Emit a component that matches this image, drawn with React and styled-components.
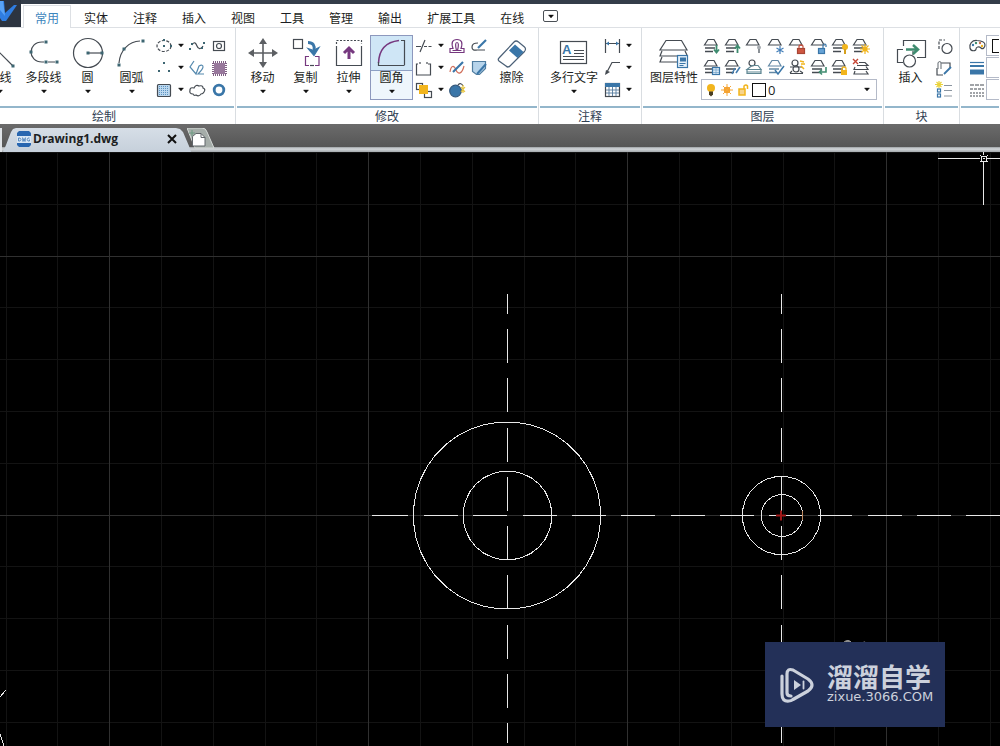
import React from 'react';
import styled, { createGlobalStyle, css } from 'styled-components';

const GlobalStyle = createGlobalStyle`
  * { box-sizing: border-box; }
  body {
    margin: 0;
    background: #000;
    font-family: "Noto Sans CJK SC", sans-serif;
    font-size: 12px;
    color: #1c1e22;
  }
  button, select {
    font: inherit;
    color: inherit;
    margin: 0;
    padding: 0;
    border: 0;
    background: none;
  }
`;

const Page = styled.div`
  display: flex;
  flex-direction: column;
  min-height: 100vh;
  overflow: hidden;
`;

const Header = styled.header`
  display: flex;
  height: 28px;
  background: #fff;
  border-top: 4px solid #343d49;
  border-bottom: 1px solid #dde0e4;
`;

const AppButton = styled.button`
  width: 21px;
  height: 27px;
  margin-top: -4px;
  background: #2c3440;
  line-height: 0;
  flex: none;
`;

const Tabs = styled.nav`
  display: flex;
  gap: 1px;
  padding: 1px 0 0 2px;
`;

const Tab = styled.a`
  height: 23px;
  padding: 0 12px;
  line-height: 25px;
  white-space: nowrap;
  text-decoration: none;
  color: ${(p) => (p.$active ? '#3d86bd' : '#1c1e22')};
  ${(p) => p.$active && css`
    background: #fff;
    box-shadow: inset 1px 0 #dde0e4, inset -1px 0 #dde0e4, inset 0 1px #dde0e4;
  `}
`;

const TabMenu = styled.button`
  display: flex;
  align-items: center;
  justify-content: center;
  width: 15px;
  height: 12px;
  margin: 5px 0 0 6px;
  border: 1px solid #4a4f55;
  border-radius: 2px;
`;

const Ribbon = styled.div`
  display: flex;
  height: 96px;
  margin-left: -27px;
  background: #fff;
`;

const Panel = styled.section`
  display: flex;
  flex-direction: column;
  flex: ${(p) => (p.$fill ? '1 1 0' : 'none')};
  min-width: 0;
  border-right: ${(p) => (p.$fill ? '0' : '1px solid #d9dde1')};
`;

const PanelBody = styled.div`
  display: flex;
  gap: ${(p) => p.$gap || 0}px;
  height: 80px;
  padding: 7px ${(p) => p.$right}px 0 ${(p) => p.$left}px;
  border-bottom: 2px solid #93b6cb;
  margin: 0 1px;
`;

const PanelTitle = styled.h2`
  margin: 0;
  font-size: 12px;
  font-weight: 400;
  line-height: 15px;
  text-align: center;
  color: #2f4052;
`;

const Buttons = styled.div`
  display: flex;
  gap: ${(p) => p.$gap || 0}px;
`;

const ToolButton = styled.button`
  display: flex;
  flex-direction: column;
  align-items: center;
  width: ${(p) => (p.$wide ? 52 : 43)}px;
  height: 65px;
  padding-top: 2px;
  white-space: nowrap;
  ${(p) => p.$active && css`
    background: linear-gradient(#cfe6f6 0 35px, #8da0c4 35px 36px, #eef6fc 36px);
    box-shadow: inset 0 0 0 1px #8d98bd;
  `}
`;

const ToolLabel = styled.span`
  height: 20px;
  line-height: 15px;
`;

const SmallGrid = styled.div`
  display: grid;
  grid-template-columns: ${(p) => p.$columns};
  grid-auto-rows: 21px;
  row-gap: 1px;
  align-items: center;
`;

const IconButton = styled.button`
  width: ${(p) => (p.$caret ? 15 : 18)}px;
  height: 20px;
  display: flex;
  align-items: center;
  justify-content: center;
`;

const LayerTools = styled.div`
  display: flex;
  flex-direction: column;
  gap: 2px;
  width: 176px;
`;

const LayerIcons = styled.div`
  display: grid;
  grid-template-columns: repeat(8, 1fr);
  grid-auto-rows: 21px;
  align-items: center;
  justify-items: center;
  padding-right: 5px;
`;

const LayerField = styled.label`
  display: flex;
  align-items: center;
  height: 21px;
  padding: 0 5px 0 1px;
  border: 1px solid #b4bac8;
  background: #fff;
`;

const LayerSelect = styled.select`
  appearance: none;
  flex: 1;
  height: 19px;
  outline: 0;
  font-family: "Open Sans", "Noto Sans CJK SC", sans-serif;
  font-size: 13px;
  line-height: 18px;
`;

const Swatch = styled.span`
  flex: none;
  width: 14px;
  height: 14px;
  margin: 0 2px;
  border: 1px solid #111;
  background: #fff;
`;

const PropertyRows = styled.div`
  display: grid;
  grid-template-columns: 18px 1fr;
  grid-auto-rows: 21px;
  row-gap: 1px;
  align-items: center;
  flex: 1;
`;

const PropertyField = styled.label`
  display: flex;
  align-items: center;
  height: 21px;
  overflow: hidden;
  border: 1px solid #b4bac8;
  border-right: 0;
  padding-left: 3px;
`;

const PropertySelect = styled.select`
  appearance: none;
  width: 100%;
  height: 19px;
`;

const DocBar = styled.div`
  display: flex;
  align-items: flex-end;
  height: 28px;
  background: linear-gradient(#6b6b6b, #565656 23px, #9da1a4 23px, #d3d7da 25px, #a3a8ac 28px);
`;

const DocEdge = styled.span`
  width: 2px;
  height: 24px;
  background: #dfe3e7;
  margin-right: 1px;
`;

const DocTab = styled.div`
  display: flex;
  align-items: center;
  width: 188px;
  height: 24px;
  padding: 0 14px 3px 14px;
  background: linear-gradient(#d6dee7, #c6d0db);
  clip-path: polygon(0 100%, 3px 17px, 8px 4px, 10px 1px, 13px 0, calc(100% - 15px) 0, calc(100% - 11px) 1px, calc(100% - 8px) 4px, calc(100% - 2px) 18px, 100% 100%);
`;

const DocName = styled.button`
  flex: 1;
  margin-left: 2px;
  text-align: left;
  font-family: "Open Sans", "Noto Sans CJK SC", sans-serif;
  font-size: 12px;
  font-weight: 700;
  line-height: 20px;
`;

const CloseButton = styled.button`
  width: 12px;
  height: 20px;
  display: flex;
  align-items: center;
  justify-content: flex-end;
`;

const NewTab = styled.button`
  width: 28px;
  height: 24px;
  margin-left: -4px;
  line-height: 0;
`;

const Canvas = styled.main`
  position: relative;
  flex: 1;
  display: flex;
  min-height: 400px;
  background: #000;
`;

const Drawing = styled.svg`
  display: block;
  flex: 1;
  min-width: 0;
  height: auto;
`;

const Watermark = styled.div`
  position: absolute;
  right: 55px;
  bottom: 19px;
  display: flex;
  align-items: center;
  gap: 11px;
  width: 180px;
  height: 85px;
  padding-left: 14px;
  background: #233058;
  color: #ccd1dc;
`;

const WatermarkText = styled.div`
  display: flex;
  flex-direction: column;
  padding-bottom: 4px;
`;

const WatermarkName = styled.strong`
  font-size: 26px;
  font-weight: 700;
  line-height: 28px;
  white-space: nowrap;
`;

const WatermarkUrl = styled.span`
  font-family: "DejaVu Sans", sans-serif;
  font-size: 13px;
  line-height: 14px;
`;

const DARK = '#454b52';
const BLUE = '#3a76a8';
const PURPLE = '#76387f';
const GREEN = '#3f8c70';
const YELLOW = '#f2b51d';

const Caret = () => (
  <svg width="8" height="5" viewBox="0 0 8 5" aria-hidden="true">
    <path d="M1.500 1h5L4 4z" fill="#111" stroke="#111" strokeWidth=".4" />
  </svg>
);

const Big = ({ children }) => (
  <svg width="32" height="32" viewBox="0 0 32 32" fill="none" stroke={DARK} strokeWidth="1.2" aria-hidden="true" style={{ flex: 'none' }}>
    {children}
  </svg>
);

const Small = ({ children }) => (
  <svg width="18" height="18" viewBox="0 0 18 18" fill="none" stroke={DARK} strokeWidth="1.2" aria-hidden="true" style={{ flex: 'none' }}>
    {children}
  </svg>
);

const Node = ({ x, y, s = 3 }) => (
  <rect x={x - s / 2} y={y - s / 2} width={s} height={s} fill="#3d6672" stroke="none" />
);

const bigIcons = {
  line: <><path d="M3 3l26 26" /><Node x={3} y={3} /><Node x={29} y={29} /></>,
  polyline: <><path d="M16 5h-2C7 5 3 10 3 15s4 10 11 10h2M20 25h7" /><Node x={18} y={5} /><Node x={3} y={15} /><Node x={18} y={25} /><Node x={29} y={25} /></>,
  circle: <><circle cx="16" cy="16" r="14.500" /><path d="M16 16h14" /><Node x={16} y={16} /><Node x={30} y={16} /></>,
  arc: <><path d="M24 4C13 4.500 4 13 3 26" /><Node x={27} y={4} /><Node x={8} y={12} /><Node x={3} y={28} /></>,
  move: <><path d="M16 5v22M5 16h22" strokeWidth="1.6" stroke="#5c5f63" /><path d="M16 1l4 6h-8zM16 31l4-6h-8zM1 16l6-4v8zM31 16l-6-4v8z" fill="#5c5f63" stroke="none" /></>,
  copy: <><rect x="3.500" y="2.500" width="9" height="9" /><path d="M18 5.500c5 0 7 3 6 8" stroke={BLUE} strokeWidth="3" /><path d="M18 11.500l3 1 2 1 6-3-5 8z" fill={BLUE} stroke={BLUE} /><path d="M19 19.500h-3.500v9h3.500M25 19.500h4v9h-4" stroke={PURPLE} /><path d="M20 28.500h4" stroke={DARK} /></>,
  stretch: <><path d="M3.500 9v19.500h25V9" /><path d="M3.500 7V3.500h25V7" strokeDasharray="2 1.500" /><path d="M16 22V11M11 16l5-5 5 5" stroke={PURPLE} strokeWidth="3" /></>,
  fillet: <><path d="M2.500 26C3 13 10 5 23 3.500" stroke={PURPLE} strokeWidth="1.500" /><path d="M25 3.500h3.500V28" /><path d="M2.500 25v3.500h26" /></>,
  eraser: <><path d="M3 21L18 5q2-2 4.500 0l6 5q2 2 0 4.500L14 29q-2 2-4 0l-7-5q-1.500-1.500 0-3z" fill="#fff" stroke="#4b6077" /><path d="M18 6.500l8.500 7.500-6 6L12 12.500z" fill={BLUE} stroke="none" transform="translate(1 1)" /></>,
  mtext: <><rect x="2.500" y="4.500" width="26" height="22" /><path d="M16 13.500h10M16 16.500h10M5 19.500h21M5 22.500h21" /><text x="4" y="17" fontFamily="Liberation Sans" fontWeight="700" fontSize="13" fill={BLUE} stroke="none">A</text></>,
  layerProps: <><path d="M8 3.500h15.500L29 13H2zM4 14l-2 5h18M4 20l-2 5h17M27 14l2 4" /><rect x="19.500" y="18.500" width="10" height="12" fill="#e6f1fa" stroke={BLUE} /><path d="M21.500 26.500h6M21.500 28.500h4" stroke={BLUE} /><rect x="22" y="20.500" width="6" height="4" fill={BLUE} stroke="none" /></>,
  insert: <><path d="M8.500 9V3.500h22v17H22M8 12.500H2.500v13H8M18 14v4" /><circle cx="14.500" cy="24" r="6" /><path d="M11 12.500h12M18 8l5 4.500-5 4.500" stroke={GREEN} strokeWidth="2.500" /></>,
};

const smallIcons = {
  ellipse: <><ellipse cx="9" cy="9" rx="7" ry="5.500" strokeDasharray="3 1.500" /><Node x={9} y={9} s={2} /><Node x={9} y={3} s={2} /><Node x={16} y={9} s={2} /></>,
  spline: <><path d="M4 8c2-4 4-2 5 1s4 4 6 0" /><Node x={2} y={12} s={2} /><Node x={4} y={7} s={2} /><Node x={16} y={6} s={2} /><Node x={14} y={11} s={2} /></>,
  region: <><rect x="3.500" y="4.500" width="11" height="9" /><circle cx="9" cy="9" r="2.500" /></>,
  points: <><Node x={9} y={4} s={2} /><Node x={4} y={12} s={2} /><Node x={14} y={12} s={2} /></>,
  wave: <path d="M6 2L2 8l6 7 3-8q4-2 4 1 0 2-5 7h6" stroke="#5589ae" />,
  gradient: <><rect x="4" y="4" width="11" height="11" fill="#98789c" stroke="none" /><rect x="3" y="3" width="13" height="13" stroke="#806084" strokeDasharray="1 1" strokeWidth="2" /></>,
  hatch: <><rect x="2.500" y="3.500" width="13" height="12" rx="1" fill="#bcd8ef" /><path d="M4 5.500h10M4 7.500h10M4 9.500h10M4 11.500h10M4 13.500h10" stroke="#5e94c1" strokeDasharray="1 1" /></>,
  cloud: <path d="M5 13q-4 0-3-4 0-3 4-2 2-4 5-2 4-1 4 2 3 1 1 4-1 2-3 2-2 3-5 1-2 1-3-1z" />,
  donut: <circle cx="9" cy="9" r="4.800" stroke={BLUE} strokeWidth="2.800" />,
  trim: <><path d="M5 15l5-12M1 9.500h5" /><path d="M9 9.500h8" strokeDasharray="3 1.500" /></>,
  offset: <><path d="M2 15.500h14v-4h-3q3-9-4-9t-4 9H2z" stroke={PURPLE} /><path d="M4.500 13.500h4q-2-8 .5-8t.5 8h4" stroke={PURPLE} /></>,
  editLine: <><path d="M8 6Q2 6 2 10t5 3h8" /><path d="M8 11l8-8" stroke={BLUE} strokeWidth="2.200" /></>,
  breakLine: <><path d="M3 5H1.500v11h14V5H13" /><path d="M5 3v2M12 3v2" /></>,
  editSpline: <><path d="M2 13c1-7 4-7 6-2s6 4 8-4" stroke="#d1705c" /><path d="M5 13l10-10" stroke={BLUE} strokeWidth="2.200" /></>,
  editHatch: <><path d="M2.500 2.500h13v7l-6 6h-3l-4-3z" fill="#b7d4eb" stroke="#507da0" /><path d="M7 15l9-10" stroke={BLUE} strokeWidth="2" /></>,
  order: <><rect x="1.500" y="2.500" width="6" height="6" /><rect x="9.500" y="10.500" width="7" height="6" /><rect x="4" y="4" width="9" height="9" fill={YELLOW} stroke="none" /></>,
  explode: <><circle cx="7.500" cy="10" r="5.800" fill={BLUE} stroke="#365a7d" /><path d="M10 4q3-3 5 1" /><path d="M13 6l4 5M17 6l-4 5M15 4v8" stroke="#e6c33c" /></>,
  dimension: <><path d="M2.500 2v14M16.500 2v14M3 6.500h13" /><path d="M3 6.500l3-2v4zM16 6.500l-3-2v4z" fill={BLUE} stroke="none" /></>,
  leader: <><path d="M17 3.500H9L4 13" /><path d="M2 16l1-5 4 2z" fill={DARK} stroke="none" /></>,
  table: <><rect x="2.500" y="2.500" width="14" height="13" /><path d="M2 4h15" stroke={BLUE} strokeWidth="4" /><path d="M3 9h13M3 12h13M6 6v9M9.500 6v9M13 6v9" strokeWidth=".9" stroke="#557b9d" /></>,
  blockEdit: <><path d="M4 12V3h6" strokeDasharray="3 1.500" /><circle cx="12" cy="11.500" r="5" /></>,
  blockAttr: <><path d="M6 4h9v5M2 9v7h6" /><path d="M3 10V4q2-3 3 0v6" stroke="#7a8086" /><path d="M9 15l7-7" stroke={BLUE} strokeWidth="1.800" /></>,
  blockList: <><path d="M9 4.500h8M9 9.500h8M9 15h8" stroke="#8b95a0" /><rect x="2.500" y="8" width="3" height="3" stroke={BLUE} /><rect x="2.500" y="13" width="3" height="3" stroke={BLUE} /><path d="M4 0v7M0 3.500h8M1.500 1l5 5M6.500 1l-5 5" stroke="#ead33b" /></>,
  palette: <><path d="M9 3.500C4 3 1 7 2 11s6 3 6 1 3-3 5-1 4-1 4-3q0-4-8-4.500z" /><circle cx="5" cy="8" r="1.200" fill={BLUE} stroke="none" /><circle cx="8" cy="6" r="1.200" fill={GREEN} stroke="none" /><circle cx="12" cy="6" r="1.200" fill="#cc7350" stroke="none" /><circle cx="14" cy="9" r="1.200" fill={YELLOW} stroke="none" /></>,
  lineWeight: <><path d="M2 3.500h14" stroke={BLUE} /><path d="M2 7h14" stroke={BLUE} strokeWidth="2" /><path d="M2 13h14" stroke={BLUE} strokeWidth="5" /></>,
  lineType: <><path d="M2 4h14" strokeDasharray="4 1" /><path d="M2 8h14" strokeDasharray="3 1" /><path d="M2 12h14M2 15h14" strokeDasharray="2 1" /></>,
};

const Sheets = ({ lines = 2, color = DARK }) => (
  <g stroke={color}>
    <path d="M5 2.500h6l3 5.500H1.500z" />
    {lines > 0 && <path d="M2 11h10" strokeWidth="1.500" />}
    {lines > 1 && <path d="M2 14.500h8" strokeWidth="1.500" />}
  </g>
);

const layerIcons = [
  ['图层下移', <><Sheets /><path d="M13.500 8v7M11 12.500l2.500 3 2.500-3" stroke={GREEN} strokeWidth="1.800" /></>],
  ['图层上移', <><Sheets /><path d="M13.500 16V9M11 11.500l2.500-3 2.500 3" stroke={GREEN} strokeWidth="1.800" /></>],
  ['关闭图层', <><Sheets lines={0} /><circle cx="14" cy="10.500" r="2" fill="#a6abb0" stroke="none" /><path d="M14 12v4" stroke="#8a9096" strokeWidth="2" /></>],
  ['冻结图层', <><Sheets lines={0} /><path d="M13 9v8M9.500 11l7 4M16.500 11l-7 4" stroke="#437eb8" /></>],
  ['锁定图层', <><Sheets lines={0} /><rect x="9.500" y="11.500" width="7" height="5" fill="#cf5742" stroke="#a84535" /><path d="M11 11V9q2-2 4 0v2" stroke="#c4503d" /></>],
  ['解锁图层', <><Sheets lines={0} /><rect x="8.500" y="11.500" width="6" height="5" fill="#66a3d6" stroke={BLUE} /><path d="M13 11V8q2-2 3 0v2" stroke={BLUE} /></>],
  ['打开所有图层', <><Sheets /><circle cx="14" cy="10" r="3" fill={YELLOW} stroke="none" /><path d="M14 12v5" stroke="#d5a01e" strokeWidth="2" /></>],
  ['解冻所有图层', <><Sheets /><circle cx="13" cy="12" r="2.500" fill={YELLOW} stroke="none" /><path d="M13 7v10M8 12h10M9.500 8.500l7 7M16.500 8.500l-7 7" stroke={YELLOW} /></>],
  ['图层状态', <><Sheets /><rect x="9.500" y="9.500" width="7" height="7" fill="#dcecf7" stroke={BLUE} /><path d="M10 12h6M10 14.500h6M13 10v6" stroke="#70a2c8" strokeWidth=".7" /></>],
  ['匹配图层', <><Sheets /><path d="M8 16l3-6M12 15l4-6" stroke="#477eb0" strokeWidth="1.600" /></>],
  ['隔离图层', <><circle cx="7" cy="5" r="3" /><path d="M7 7.500h6l3 4H2z" stroke="#5f8793" /><path d="M2 11.500v4h14v-4M2 14h14" stroke="#5f8793" /></>],
  ['当前图层', <><Sheets color="#6288a5" /><path d="M8 12l3 4 6-8" stroke={BLUE} strokeWidth="1.500" /></>],
  ['图层漫游', <><circle cx="7" cy="5" r="3" /><circle cx="8" cy="11" r="3" /><path d="M2 9h12M2 15.500h13M4 13l-2 2M12 13l3 2" /><path d="M12 3l4 1M13 6h4M13 8l3 3" stroke={YELLOW} strokeWidth="1.500" /></>],
  ['上一图层', <><Sheets /><path d="M16 9v5h-6M12 11.500L9.500 14l2.500 2.500" stroke={GREEN} strokeWidth="1.600" /></>],
  ['锁定其他图层', <><Sheets /><rect x="10" y="12" width="6" height="5" fill={YELLOW} stroke="none" /><path d="M11 12v-2q2-2 4 0v2" stroke={YELLOW} /></>],
  ['删除图层', <><path d="M7 4.500h6l3 3H5M3 9l-1 2.500h14l-2-3M3 13l-1 3h14l-2-3" /><path d="M1 1l5 5M6 1L1 6" stroke="#c54635" strokeWidth="1.400" /></>],
];

const Tool = ({ icon, label, caret = true, wide, active }) => (
  <ToolButton $wide={wide} $active={active} aria-pressed={active}>
    <Big>{bigIcons[icon]}</Big>
    <ToolLabel>{label}</ToolLabel>
    {caret && <Caret />}
  </ToolButton>
);

const Mini = ({ icon, label }) => (
  <IconButton aria-label={label}><Small>{smallIcons[icon]}</Small></IconButton>
);

const More = ({ label }) => (
  <IconButton $caret aria-label={label}><Caret /></IconButton>
);

const tabs = ['常用', '实体', '注释', '插入', '视图', '工具', '管理', '输出', '扩展工具', '在线'];

const ring = (cx, cy, r, sides) =>
  Array.from({ length: sides }, (_, i) => {
    const a = (Math.PI * 2 * (i + 0.5)) / sides;
    return `${(cx + r * Math.cos(a)).toFixed(1)},${(cy + r * Math.sin(a)).toFixed(1)}`;
  }).join(' ');

const GRID = 51.8;
const gridLines = Array.from({ length: 60 }, (_, i) => i);

const GridLines = () => (
  <g shapeRendering="crispEdges">
    {[false, true].map((major) => (
      <g key={String(major)} stroke={major ? '#303030' : '#131313'}>
        {gridLines.filter((i) => ((i + 3) % 5 === 0) === major).map((i) => (
          <path key={i} d={`M${Math.floor(6 + i * GRID) + 0.5} 0V3000`} />
        ))}
        {gridLines.filter((i) => ((i + 3) % 5 === 0) === major).map((i) => (
          <path key={i} d={`M0 ${Math.round(i * GRID) + 0.5}H4000`} />
        ))}
      </g>
    ))}
  </g>
);

const CenterLine = ({ x }) => (
  <>
    <path d={`M${x} 142v20`} />
    <path d={`M${x} 177V591`} strokeDasharray="34 15.250" />
  </>
);

function Sketch() {
  return (
    <Drawing role="img" aria-label="Drawing1.dwg">
      <GridLines />
      <g fill="none" stroke="#e8e8e8" shapeRendering="crispEdges">
        <CenterLine x={507.5} />
        <CenterLine x={781.5} />
        <path d="M372 363.500h36" />
        <path d="M424 363.500H4000" strokeDasharray="34 15.300" />
        <polygon points={ring(507, 363.5, 93.7, 40)} />
        <polygon points={ring(507.5, 363.5, 44.5, 28)} />
        <polygon points={ring(781.5, 363.5, 39.3, 24)} />
        <polygon points={ring(782, 363.5, 21, 20)} />
        <path d="M0 545l6-7M0 582l4 12" />
        <path d="M938 6.500h42M987 6.500h60M983.500 0v3M983.500 10v43" />
        <rect x="981.500" y="4.500" width="5" height="5" />
        <path d="M980 3l2 2M988 3l-2 2M980 10l2-2M988 10l-2-2M983 6.500h2" />
      </g>
      <path d="M776 363.500h10M781 358.500v10" stroke="#a01818" strokeWidth="2" />
      <path d="M802.500 359v9" stroke="#c08a60" />
      <path d="M843 491q5-5 9 0M862 491q2-2 5 0" stroke="#aaa" fill="#888" />
    </Drawing>
  );
}

export default function App() {
  return (
    <Page>
      <GlobalStyle />
      <Header>
        <AppButton aria-label="应用程序菜单">
          <svg width="21" height="27" viewBox="0 0 21 27">
            <path d="M0 1h4l1 12L14 5h3L6 21H2L0 18z" fill="#2f7de0" />
            <path d="M0 1h3l2 15-5-6z" fill="#58a3f5" />
          </svg>
        </AppButton>
        <Tabs>
          {tabs.map((t, i) => (
            <Tab key={t} href="#" $active={i === 0}>{t}</Tab>
          ))}
          <TabMenu aria-label="更多选项卡"><Caret /></TabMenu>
        </Tabs>
      </Header>

      <Ribbon>
        <Panel>
          <PanelBody $left={4} $right={6} $gap={2}>
            <Buttons $gap={1}>
              <Tool icon="line" label="直线" />
              <Tool icon="polyline" label="多段线" />
              <Tool icon="circle" label="圆" />
              <Tool icon="arc" label="圆弧" />
            </Buttons>
            <SmallGrid $columns="18px 15px 22px 18px">
              <Mini icon="ellipse" label="椭圆" /><More label="椭圆选项" /><Mini icon="spline" label="样条曲线" /><Mini icon="region" label="面域" />
              <Mini icon="points" label="点" /><More label="点选项" /><Mini icon="wave" label="徒手画" /><Mini icon="gradient" label="渐变色" />
              <Mini icon="hatch" label="图案填充" /><More label="填充选项" /><Mini icon="cloud" label="修订云线" /><Mini icon="donut" label="圆环" />
            </SmallGrid>
          </PanelBody>
          <PanelTitle>绘制</PanelTitle>
        </Panel>

        <Panel>
          <PanelBody $left={4} $right={4} $gap={2}>
            <Buttons>
              <Tool icon="move" label="移动" />
              <Tool icon="copy" label="复制" />
              <Tool icon="stretch" label="拉伸" />
              <Tool icon="fillet" label="圆角" active />
            </Buttons>
            <SmallGrid $columns="18px 15px 22px 18px">
              <Mini icon="trim" label="修剪" /><More label="修剪选项" /><Mini icon="offset" label="偏移" /><Mini icon="editLine" label="编辑多段线" />
              <Mini icon="breakLine" label="打断" /><More label="打断选项" /><Mini icon="editSpline" label="编辑样条曲线" /><Mini icon="editHatch" label="编辑填充" />
              <Mini icon="order" label="绘图次序" /><More label="次序选项" /><Mini icon="explode" label="分解" />
            </SmallGrid>
            <Tool icon="eraser" label="擦除" caret={false} />
          </PanelBody>
          <PanelTitle>修改</PanelTitle>
        </Panel>

        <Panel>
          <PanelBody $left={8} $right={4} $gap={3}>
            <Tool icon="mtext" label="多行文字" wide />
            <SmallGrid $columns="18px 15px">
              <Mini icon="dimension" label="标注" /><More label="标注选项" />
              <Mini icon="leader" label="引线" /><More label="引线选项" />
              <Mini icon="table" label="表格" /><More label="表格选项" />
            </SmallGrid>
          </PanelBody>
          <PanelTitle>注释</PanelTitle>
        </Panel>

        <Panel>
          <PanelBody $left={5} $right={5} $gap={1}>
            <Tool icon="layerProps" label="图层特性" caret={false} wide />
            <LayerTools>
              <LayerIcons>
                {layerIcons.map(([label, art]) => (
                  <IconButton key={label} aria-label={label}><Small>{art}</Small></IconButton>
                ))}
              </LayerIcons>
              <LayerField>
                <svg width="47" height="18" viewBox="0 0 47 18" aria-hidden="true" style={{ flex: 'none' }}>
                  <circle cx="8" cy="7" r="4" fill={YELLOW} />
                  <path d="M6 10.500h4v3l-2 2-2-2z" fill="#4a3e22" />
                  <circle cx="24" cy="9" r="3.200" fill="#f39a22" />
                  <path d="M24 3v12M18 9h12M20 5l8 8M28 5l-8 8" stroke="#f5a83b" />
                  <rect x="36" y="8" width="6" height="6" fill="#f7d48c" stroke={YELLOW} strokeWidth="1.500" />
                  <path d="M41 8V5q2-2 3.500 0v3" fill="none" stroke={YELLOW} strokeWidth="1.500" />
                </svg>
                <Swatch />
                <LayerSelect aria-label="当前图层"><option>0</option></LayerSelect>
                <Caret />
              </LayerField>
            </LayerTools>
          </PanelBody>
          <PanelTitle>图层</PanelTitle>
        </Panel>

        <Panel>
          <PanelBody $left={4} $right={5} $gap={3}>
            <Tool icon="insert" label="插入" caret={false} />
            <SmallGrid $columns="18px">
              <Mini icon="blockEdit" label="编辑块" />
              <Mini icon="blockAttr" label="块属性" />
              <Mini icon="blockList" label="属性管理" />
            </SmallGrid>
          </PanelBody>
          <PanelTitle>块</PanelTitle>
        </Panel>

        <Panel $fill>
          <PanelBody $left={7} $right={0}>
            <PropertyRows>
              <Mini icon="palette" label="颜色" />
              <PropertyField><Swatch /><PropertySelect aria-label="颜色" /></PropertyField>
              <Mini icon="lineWeight" label="线宽" />
              <PropertyField><PropertySelect aria-label="线宽" /></PropertyField>
              <Mini icon="lineType" label="线型" />
              <PropertyField><PropertySelect aria-label="线型" /></PropertyField>
            </PropertyRows>
          </PanelBody>
        </Panel>
      </Ribbon>

      <DocBar>
        <DocEdge />
        <DocTab>
          <svg width="14" height="16" viewBox="0 0 14 16" aria-hidden="true">
            <path d="M2 0h10l2 2v3H0V2zM0 12h14v2l-2 2H2l-2-2z" fill="#2866b0" />
            <path d="M0 5h14v7H0z" fill="#d8e6f4" />
            <path d="M1.500 7h1.500l1 1.500-1 1.500H1.500zM5.500 6.500l.5 4 1-3 1 3 .5-4M12.500 7H11l-.8 1.500L11 10h1.500V8.500" fill="none" stroke="#447ab5" strokeWidth=".8" />
          </svg>
          <DocName>Drawing1.dwg</DocName>
          <CloseButton aria-label="关闭">
            <svg width="10" height="10" viewBox="0 0 10 10"><path d="M1 1l8 8M9 1L1 9" stroke="#111" strokeWidth="2" /></svg>
          </CloseButton>
        </DocTab>
        <NewTab aria-label="新建图形">
          <svg width="28" height="24" viewBox="0 0 28 24">
            <path d="M0 0h15q4 0 5 4l7 16h-19z" fill="#a5ada9" stroke="#d6dad8" />
            <path d="M5.500 8.500L9 5.500h5l4 4v8.500H5.500z" fill="#fff" stroke="#60666a" />
            <path d="M14 5.500v4h4" fill="none" stroke="#60666a" />
            <path d="M5 2v6M2 5h6" stroke="#6d9b82" />
          </svg>
        </NewTab>
      </DocBar>

      <Canvas>
        <Sketch />
        <Watermark>
          <svg width="37" height="38" viewBox="0 0 37 38" fill="none" stroke="#ccd1dc" strokeWidth="3.200" strokeLinecap="round" strokeLinejoin="round" aria-hidden="true">
            <path d="M3 10v18q0 8 7 7 2 0 4-1.500l15-8.500q8-6 0-12L14 4Q8 2 8 8v19q0 3 4 3" />
            <path d="M15 14l7 5-7 5z" fill="#ccd1dc" stroke="none" />
            <path d="M24.500 15.500v7" strokeWidth="1.800" />
          </svg>
          <WatermarkText>
            <WatermarkName>溜溜自学</WatermarkName>
            <WatermarkUrl>zixue.3066.COM</WatermarkUrl>
          </WatermarkText>
        </Watermark>
      </Canvas>
    </Page>
  );
}
